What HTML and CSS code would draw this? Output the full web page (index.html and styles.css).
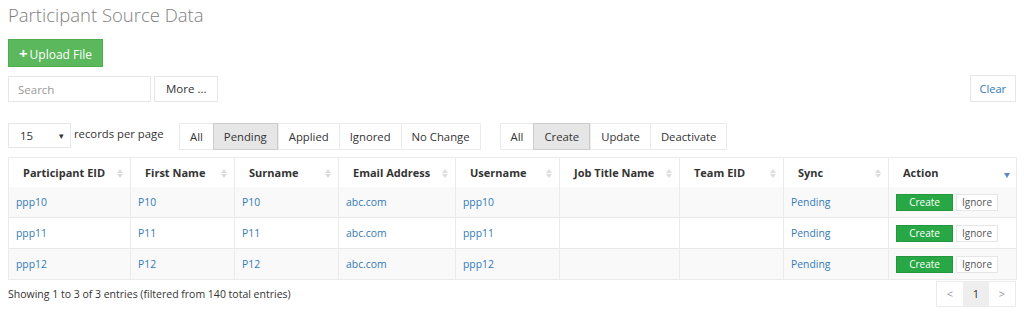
FILE: index.html
```html
<!DOCTYPE html>
<html lang="en">

<head>
    <meta charset="UTF-8">
    <title>Participant Source Data</title>
    <link rel="stylesheet" href="styles.css">
</head>

<body>
    <h1 class="page-title">Participant Source Data</h1>

    <div class="upload-row">
        <a class="btn btn-upload" href="javascript:void(0);"><span class="plus">+</span>Upload File</a>
    </div>

    <div class="search-row">
        <div class="search-left">
            <input class="search-input" type="text" placeholder="Search">
            <a class="btn btn-more" href="javascript:void(0);">More ...</a>
        </div>
        <a class="btn btn-clear" href="javascript:void(0);">Clear</a>
    </div>

    <div class="filter-row">
        <div class="length-box">
            <div class="length-select"><span>15</span><span class="caret">&#9662;</span></div>
            <span class="length-label">records per page</span>
        </div>
        <div class="btn-group group-status">
            <a href="javascript:void(0);">All</a>
            <a href="javascript:void(0);" class="active">Pending</a>
            <a href="javascript:void(0);">Applied</a>
            <a href="javascript:void(0);">Ignored</a>
            <a href="javascript:void(0);">No Change</a>
        </div>
        <div class="btn-group group-action">
            <a href="javascript:void(0);">All</a>
            <a href="javascript:void(0);" class="active">Create</a>
            <a href="javascript:void(0);">Update</a>
            <a href="javascript:void(0);">Deactivate</a>
        </div>
    </div>

    <table class="data-table">
        <colgroup>
            <col style="width:122px">
            <col style="width:104px">
            <col style="width:104px">
            <col style="width:117px">
            <col style="width:104px">
            <col style="width:120px">
            <col style="width:104px">
            <col style="width:105px">
            <col style="width:128px">
        </colgroup>
        <thead>
            <tr>
                <th class="sorting">Participant EID</th>
                <th class="sorting">First Name</th>
                <th class="sorting">Surname</th>
                <th class="sorting">Email Address</th>
                <th class="sorting">Username</th>
                <th class="sorting">Job Title Name</th>
                <th class="sorting">Team EID</th>
                <th class="sorting">Sync</th>
                <th class="sorting-desc">Action</th>
            </tr>
        </thead>
        <tbody>
            <tr>
                <td><a href="#">ppp10</a></td>
                <td><a href="#">P10</a></td>
                <td><a href="#">P10</a></td>
                <td><a href="#">abc.com</a></td>
                <td><a href="#">ppp10</a></td>
                <td></td>
                <td></td>
                <td><a href="#">Pending</a></td>
                <td><a class="btn-create" href="#">Create</a><a class="btn-ignore" href="#">Ignore</a></td>
            </tr>
            <tr>
                <td><a href="#">ppp11</a></td>
                <td><a href="#">P11</a></td>
                <td><a href="#">P11</a></td>
                <td><a href="#">abc.com</a></td>
                <td><a href="#">ppp11</a></td>
                <td></td>
                <td></td>
                <td><a href="#">Pending</a></td>
                <td><a class="btn-create" href="#">Create</a><a class="btn-ignore" href="#">Ignore</a></td>
            </tr>
            <tr>
                <td><a href="#">ppp12</a></td>
                <td><a href="#">P12</a></td>
                <td><a href="#">P12</a></td>
                <td><a href="#">abc.com</a></td>
                <td><a href="#">ppp12</a></td>
                <td></td>
                <td></td>
                <td><a href="#">Pending</a></td>
                <td><a class="btn-create" href="#">Create</a><a class="btn-ignore" href="#">Ignore</a></td>
            </tr>
        </tbody>
    </table>

    <div class="table-footer">
        <div class="info">Showing 1 to 3 of 3 entries (filtered from 140 total entries)</div>
        <div class="pager">
            <a href="javascript:void(0);" class="disabled">&lt;</a>
            <a href="javascript:void(0);" class="current">1</a>
            <a href="javascript:void(0);" class="disabled">&gt;</a>
        </div>
    </div>
</body>

</html>
```

FILE: styles.css
```css
body {
    margin: 0px;
    padding: 0px 8px;
    font-family: "Open Sans", "Liberation Sans", sans-serif;
    font-size: 12px;
    color: #333333;
    background: #ffffff;
}

a {
    text-decoration: none;
    color: #337ab7;
}

.page-title {
    margin: 0px;
    padding-top: 2px;
    height: 37px;
    font-size: 18.5px;
    font-weight: 300;
    color: #808080;
    line-height: 26px;
}

.btn {
    display: inline-block;
    box-sizing: border-box;
    border: 1px solid #e6e6e6;
    background: #ffffff;
    color: #333333;
}

.upload-row {
    height: 36px;
}

.btn-upload {
    height: 28px;
    line-height: 26px;
    padding: 0px 10px 0px 10px;
    background: #5cb85c;
    border-color: #4cae4c;
    color: #ffffff;
    font-size: 12px;
}

.btn-upload .plus {
    font-weight: 700;
    font-size: 15px;
    margin-right: 2px;
}

/* search + clear */
.search-row {
    display: flex;
    justify-content: space-between;
    align-items: flex-end;
    height: 27px;
    margin-bottom: 21px;
}

.search-left {
    display: flex;
    gap: 3px;
}

.search-input {
    box-sizing: border-box;
    width: 143px;
    height: 26px;
    border: 1px solid #e6e6e6;
    padding: 0px 9px;
    font-family: inherit;
    font-size: 11.5px;
    outline: none;
}

.search-input::placeholder {
    color: #999999;
}

.btn-more {
    height: 26px;
    line-height: 24px;
    padding: 0px 11px;
    font-size: 11.5px;
}

.btn-clear {
    height: 27px;
    line-height: 25px;
    padding: 0px 9px;
    font-size: 11px;
    color: #337ab7;
}

/* length + filter groups */
.filter-row {
    display: flex;
    align-items: flex-start;
    height: 34px;
}

.length-box {
    display: flex;
    align-items: flex-start;
    width: 171px;
}

.length-select {
    box-sizing: border-box;
    width: 63px;
    height: 25px;
    border: 1px solid #e6e6e6;
    display: flex;
    justify-content: space-between;
    align-items: center;
    padding: 0px 6px 0px 11px;
    font-size: 11.5px;
}

.length-select .caret {
    font-size: 9px;
    color: #333333;
}

.length-label {
    margin-left: 3px;
    line-height: 22px;
    font-size: 11.3px;
}

.btn-group {
    display: flex;
    border: 1px solid #ebebeb;
    height: 27px;
    box-sizing: border-box;
    font-size: 11.3px;
}

.btn-group a {
    color: #333333;
    padding: 0px 10px;
    line-height: 25px;
    border-left: 1px solid #ebebeb;
}

.btn-group a:first-child {
    border-left: none;
}

.btn-group a.active {
    background: #e6e6e6;
    border: 1px solid #cccccc;
    margin: -1px 0px;
    line-height: 25px;
}

.group-action {
    margin-left: 19px;
}

/* table */
.data-table {
    width: 1008px;
    border-collapse: collapse;
    table-layout: fixed;
    border: 1px solid #ebebeb;
}

.data-table th,
.data-table td {
    border-left: 1px solid #ebebeb;
    text-align: left;
}

.data-table th {
    height: 29px;
    padding: 0px 14px;
    font-size: 11px;
    font-weight: 700;
    position: relative;
}

.data-table th.sorting::after {
    content: "";
    position: absolute;
    right: 7px;
    top: 11px;
    width: 0px;
    height: 0px;
    border-left: 3px solid transparent;
    border-right: 3px solid transparent;
    border-bottom: 4px solid #dddddd;
}

.data-table th.sorting::before {
    content: "";
    position: absolute;
    right: 7px;
    top: 16px;
    width: 0px;
    height: 0px;
    border-left: 3px solid transparent;
    border-right: 3px solid transparent;
    border-top: 4px solid #dddddd;
}

.data-table th.sorting-desc::after {
    content: "";
    position: absolute;
    right: 6px;
    top: 15px;
    width: 0px;
    height: 0px;
    border-left: 3px solid transparent;
    border-right: 3px solid transparent;
    border-top: 5px solid #5c8ac7;
}

.data-table td {
    height: 30px;
    padding: 0px 7px;
    font-size: 10.4px;
    border-top: 1px solid #e8e8e8;
}

.data-table tbody tr:nth-child(odd) {
    background: #f9f9f9;
}

.data-table tbody tr:first-child td {
    border-top: none;
}

.btn-create {
    display: inline-block;
    width: 57px;
    height: 17px;
    line-height: 15px;
    text-align: center;
    background: #28a745;
    border: 1px solid #23963e;
    color: #ffffff;
    font-size: 10px;
    box-sizing: border-box;
    vertical-align: middle;
}

.btn-ignore {
    display: inline-block;
    height: 17px;
    line-height: 15px;
    padding: 0px 5px;
    margin-left: 3px;
    background: #ffffff;
    border: 1px solid #e6e6e6;
    color: #555555;
    font-size: 10px;
    box-sizing: border-box;
    vertical-align: middle;
}

/* footer */
.table-footer {
    display: flex;
    justify-content: space-between;
    align-items: flex-start;
    padding-top: 1px;
}

.info {
    font-size: 10.5px;
    line-height: 26px;
    color: #333333;
}

.pager {
    display: flex;
    border: 1px solid #ebebeb;
}

.pager a {
    width: 26px;
    height: 24px;
    line-height: 24px;
    text-align: center;
    color: #999999;
    font-size: 11px;
}

.pager a.current {
    background: #eeeeee;
    color: #333333;
}
```
